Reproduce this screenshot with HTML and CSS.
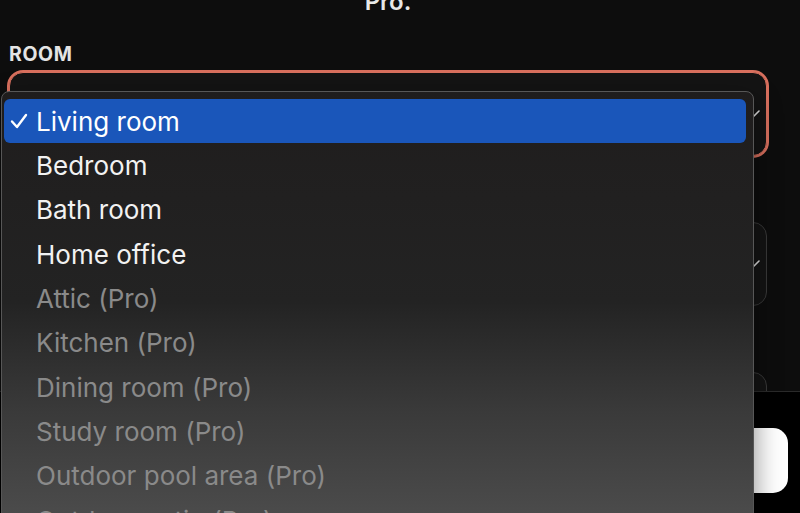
FILE: index.html
```html
<!DOCTYPE html>
<html>
<head>
  <meta charset="utf-8">
  <link rel="stylesheet" href="styles.css">
</head>
<body>
  <div class="screen">
    <main class="sheet">
      <p class="intro">Pro.</p>

      <div class="field">
        <label class="field-label">ROOM</label>
        <div class="select is-open">
          <span class="select-value"></span>
          <svg class="chevron" width="13" height="8" viewBox="0 0 13 8"><polyline points="1,1 6.5,6.5 12,1" /></svg>
        </div>
      </div>

      <div class="field">
        <label class="field-label"></label>
        <div class="select">
          <span class="select-value"></span>
          <svg class="chevron" width="13" height="8" viewBox="0 0 13 8"><polyline points="1,1 6.5,6.5 12,1" /></svg>
        </div>
      </div>

      <div class="field">
        <label class="field-label"></label>
        <div class="select">
          <span class="select-value"></span>
          <svg class="chevron" width="13" height="8" viewBox="0 0 13 8"><polyline points="1,1 6.5,6.5 12,1" /></svg>
        </div>
      </div>
    </main>

    <footer class="action-bar">
      <button class="btn-generate"></button>
    </footer>

    <!-- open dropdown of the ROOM select -->
    <ul class="menu">
      <li class="menu-item selected">
        <svg class="check" width="18" height="16" viewBox="0 0 18 16"><polyline points="2,8.5 7,14 16,2" /></svg>
        Living room
      </li>
      <li class="menu-item">Bedroom</li>
      <li class="menu-item">Bath room</li>
      <li class="menu-item">Home office</li>
      <li class="menu-item disabled">Attic (Pro)</li>
      <li class="menu-item disabled">Kitchen (Pro)</li>
      <li class="menu-item disabled">Dining room (Pro)</li>
      <li class="menu-item disabled">Study room (Pro)</li>
      <li class="menu-item disabled">Outdoor pool area (Pro)</li>
      <li class="menu-item disabled">Outdoor patio (Pro)</li>
    </ul>
  </div>
</body>
</html>
```

FILE: styles.css
```css
* {
  box-sizing: border-box;
}

body {
  margin: 0;
  background: #0d0d0d;
  font-family: Inter, "Liberation Sans", sans-serif;
  color: #f2f2f2;
}

.screen {
  position: relative;
  width: 800px;
  height: 513px;
  display: flex;
  flex-direction: column;
  overflow: hidden;
}

.sheet {
  flex: 1;
  overflow: hidden;
  padding: 0 33px 0 9px;
}

.intro {
  margin: -12px 0 27px 0;
  font-size: 24px;
  line-height: 28px;
  font-weight: 600;
  text-align: center;
  color: #e8e8e8;
}

.field {
  margin-bottom: 37px;
}

.field-label {
  display: block;
  min-height: 22px;
  font-size: 19.5px;
  line-height: 22px;
  font-weight: 700;
  letter-spacing: 0.6px;
  color: #e4e4e4;
  margin-bottom: 7px;
}

.select {
  height: 84px;
  display: flex;
  align-items: center;
  justify-content: space-between;
  padding: 0 6px 0 20px;
  background: #141414;
  border: 1px solid #393939;
  border-radius: 14px;
  font-size: 24px;
}

.select.is-open {
  border-color: #d9705e;
  box-shadow: 0 0 0 2px #d9705e;
}

.chevron polyline {
  fill: none;
  stroke: #e0e0e0;
  stroke-width: 1.6;
  stroke-linecap: round;
  stroke-linejoin: round;
}

.action-bar {
  height: 122px;
  flex-shrink: 0;
  display: flex;
  padding: 36px 12px 0 12px;
  background: #000;
  border-top: 1px solid #2a2a2a;
}

.btn-generate {
  flex: 1;
  height: 65px;
  border: none;
  border-radius: 15px;
  background: #fff;
}

.menu {
  position: absolute;
  left: 1px;
  top: 91px;
  width: 753px;
  margin: 0;
  padding: 7px 7px 8px 2px;
  list-style: none;
  border: 1px solid #575757;
  border-radius: 8px;
  background: linear-gradient(#1f1d1d 0px, #232323 210px, #3a3a3a 320px, #4b4b4b 422px);
  box-shadow: 0 10px 28px rgba(0, 0, 0, 0.45);
}

.menu-item {
  display: flex;
  align-items: center;
  height: 44.33px;
  padding-left: 32px;
  font-size: 26px;
  color: #f2f2f2;
  white-space: nowrap;
}

.menu-item.selected {
  padding-left: 6px;
  gap: 8px;
  background: #1a56ba;
  border-radius: 6px;
  color: #fff;
}

.menu-item.disabled {
  color: #8a8a8a;
}

.check polyline {
  fill: none;
  stroke: #fff;
  stroke-width: 2.4;
  stroke-linecap: round;
  stroke-linejoin: round;
}
```
